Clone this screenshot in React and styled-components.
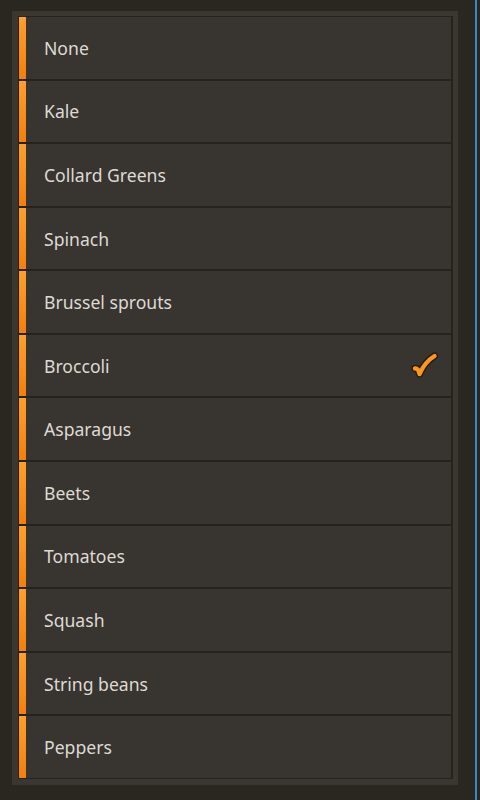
import React from "react";
import styled, { createGlobalStyle } from "styled-components";

const Global = createGlobalStyle`
  html, body { margin: 0; padding: 0; background: #2a2620; }
  body { font-family: "Noto Sans", "Open Sans", sans-serif; }
`;

const Screen = styled.div`
  width: 480px;
  height: 800px;
  display: flex;
  background: #2a2620;
  overflow: hidden;
`;

const Main = styled.div`
  width: 475px;
  padding: 11px 0 0 12px;
  box-sizing: border-box;
`;

const Edge = styled.div`
  width: 2px;
  height: 800px;
  background: #3f86c8;
`;

const Panel = styled.div`
  width: 446px;
  height: 774px;
  background: #3a3732;
  padding: 5px 5px 6px 6px;
  box-sizing: border-box;
`;

const List = styled.div`
  height: 763px;
  display: flex;
  flex-direction: column;
  border: 1px solid #26231f;
  border-right: 2px solid #26231f;
  background: #26231f;
  gap: 2px;
  box-sizing: border-box;
`;

const Row = styled.div`
  flex: 1;
  display: flex;
  align-items: center;
  background: #383430;
`;

const Accent = styled.div`
  align-self: stretch;
  width: 7px;
  background: linear-gradient(#ff9f2c, #f57f0a);
  flex: none;
`;

const Label = styled.span`
  flex: 1;
  padding-left: 18px;
  font-size: 17.6px;
  color: #dedad3;
`;

const Check = styled.svg`
  width: 30px;
  height: 30px;
  margin-right: 12px;
  margin-top: -2px;
`;

const items = [
  "None",
  "Kale",
  "Collard Greens",
  "Spinach",
  "Brussel sprouts",
  "Broccoli",
  "Asparagus",
  "Beets",
  "Tomatoes",
  "Squash",
  "String beans",
  "Peppers",
];

function CheckMark() {
  const d = "M6 18.5 C8 18 9.5 20 10.5 24 C14 16 19 10 25.5 6";
  return (
    <Check viewBox="0 0 30 30">
      <path d={d} fill="none" stroke="#241a0e" strokeWidth="7" strokeLinecap="round" strokeLinejoin="round" />
      <path d={d} fill="none" stroke="#fb9720" strokeWidth="4.4" strokeLinecap="round" strokeLinejoin="round" />
    </Check>
  );
}

export default function App() {
  return (
    <>
      <Global />
      <Screen>
        <Main>
          <Panel>
            <List>
              {items.map((t) => (
                <Row key={t}>
                  <Accent />
                  <Label>{t}</Label>
                  {t === "Broccoli" && <CheckMark />}
                </Row>
              ))}
            </List>
          </Panel>
        </Main>
        <Edge />
      </Screen>
    </>
  );
}
